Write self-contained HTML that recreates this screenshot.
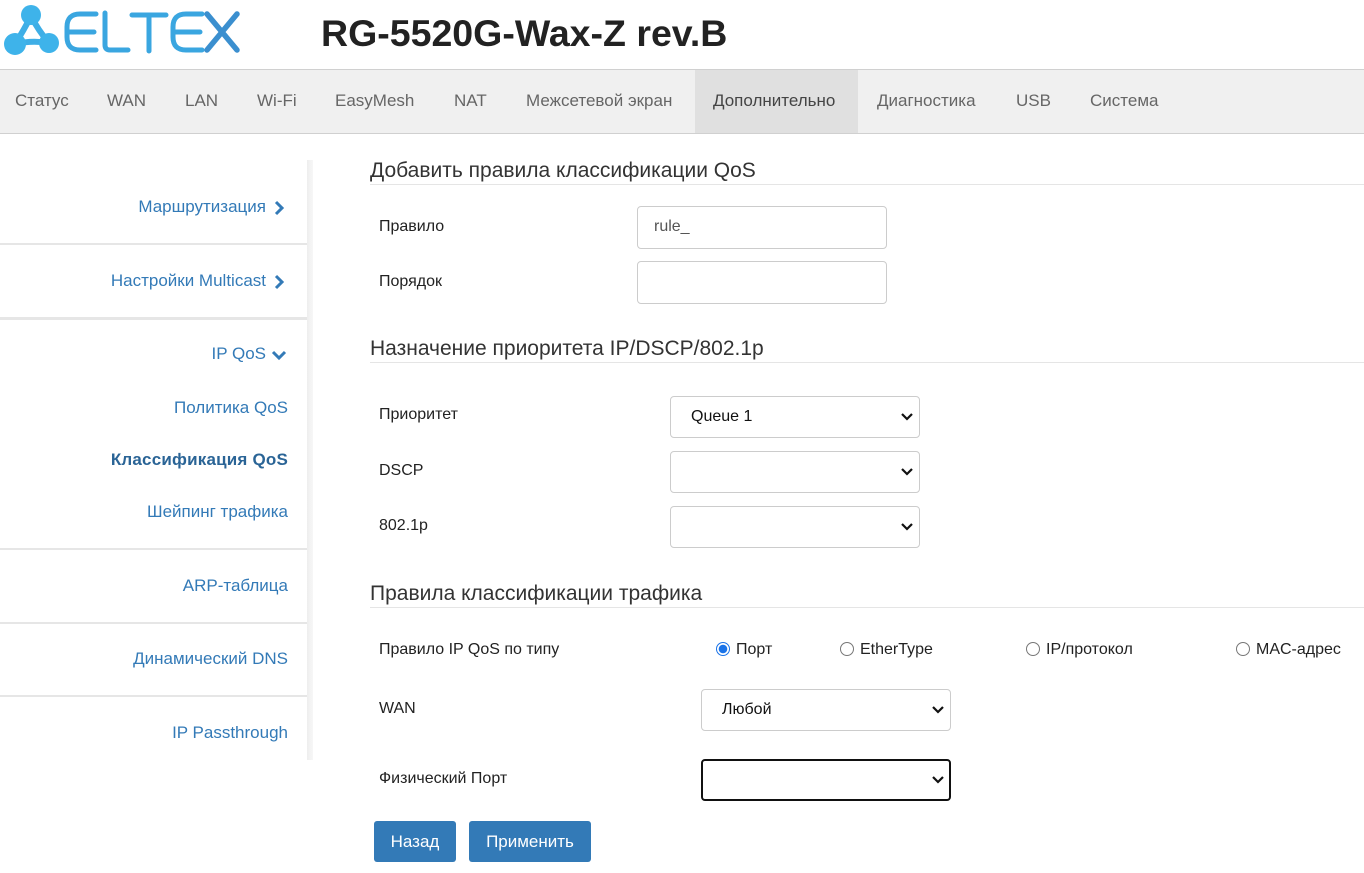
<!DOCTYPE html>
<html><head><meta charset="utf-8"><style>
*{box-sizing:border-box;margin:0;padding:0}
body{width:1364px;height:873px;position:relative;background:#fff;font-family:"Liberation Sans",Arial,sans-serif;overflow:hidden}
.a{position:absolute;white-space:nowrap}
.nav{position:absolute;left:0;top:69px;width:1364px;height:65px;background:#f0f0f0;border-top:1px solid #d0d0d0;border-bottom:1px solid #d0d0d0}
.nav span{position:absolute;top:21px;font-size:17px;color:#666}
.side{position:absolute;left:0;width:307px;text-align:right;font-size:17px;color:#337ab7}
.hr{position:absolute;left:0;width:307px;height:2px;background:#e6e6e6}
.h{position:absolute;left:370px;font-size:21px;color:#333}
.line{position:absolute;left:370px;width:994px;height:1px;background:#e5e5e5}
.lb{position:absolute;left:379px;font-size:16px;color:#222}
.in{position:absolute;border:1px solid #ccc;border-radius:4px;background:#fff;font-size:16px;color:#555;padding-left:16px;line-height:40px}
.sel{position:absolute;border:1px solid #ccc;border-radius:4px;background:#fff;font-size:16px;color:#111;padding-left:20px;line-height:39px}
.sel svg{position:absolute;right:6px;top:15px}
.rd{position:absolute;font-size:16px;color:#222}
.rd i{display:inline-block;width:14px;height:14px;border:1px solid #777;border-radius:50%;vertical-align:-2px;margin-right:6px}
.btn{position:absolute;top:821px;height:41px;background:#337ab7;color:#fff;font-size:17px;border-radius:3px;text-align:center;line-height:41px}
</style></head><body>
<svg class="a" style="left:0;top:0" width="250" height="62" viewBox="0 0 250 62">
<g stroke="#3eaee6" stroke-width="6" fill="none" stroke-linecap="round">
<path d="M31 16 Q24 30 15 44 M31 16 Q38 30 49 43 M15 44 Q32 40 49 43"/></g>
<circle cx="31" cy="15" r="10" fill="#3eb3ea"/>
<circle cx="15" cy="44" r="11" fill="#3eb3ea"/>
<circle cx="49" cy="43" r="10" fill="#3eb3ea"/>
<g stroke="#3aa6e0" stroke-width="5" fill="none" stroke-linecap="round" stroke-linejoin="round">
<path d="M96 14 H80 Q67 14 67 27 V37 Q67 50 80 50 H96 M69 32 H94"/>
<path d="M105 13 V45 Q105 50 110 50 H128"/>
<path d="M132 15 H166 M149 15 V51"/>
<path d="M202 14 H186 Q173 14 173 27 V37 Q173 50 186 50 H202 M175 32 H200"/>
</g>
<path d="M207 14 L237 50 M237 14 L207 50" stroke="#3b8fcf" stroke-width="5.5" stroke-linecap="round"/>
</svg>
<div class="a" style="left:321px;top:12px;font-size:37.5px;font-weight:bold;color:#222">RG-5520G-Wax-Z rev.B</div>
<div class="nav">
<span style="left:15px">Статус</span><span style="left:107px">WAN</span><span style="left:185px">LAN</span><span style="left:257px">Wi-Fi</span><span style="left:335px">EasyMesh</span><span style="left:454px">NAT</span><span style="left:526px">Межсетевой экран</span>
<div style="position:absolute;left:695px;top:0;width:163px;height:63px;background:#e0e0e0"></div>
<span style="left:713px;color:#444">Дополнительно</span><span style="left:877px">Диагностика</span><span style="left:1016px">USB</span><span style="left:1090px">Система</span>
</div>
<div class="a" style="left:307px;top:160px;width:6px;height:600px;background:linear-gradient(90deg,#eee,#f7f7f7)"></div>
<div class="side" style="top:197px;padding-right:41px">Маршрутизация</div>
<div class="hr" style="top:243px"></div>
<div class="side" style="top:271px;padding-right:41px">Настройки Multicast</div>
<div class="hr" style="top:317px;height:3px"></div>
<div class="side" style="top:344px;padding-right:41px">IP QoS</div>
<svg class="a" style="left:272px;top:200px" width="14" height="16" viewBox="0 0 14 16"><path d="M4 2 L10 8 L4 14" stroke="#337ab7" stroke-width="3" fill="none"/></svg>
<svg class="a" style="left:272px;top:274px" width="14" height="16" viewBox="0 0 14 16"><path d="M4 2 L10 8 L4 14" stroke="#337ab7" stroke-width="3" fill="none"/></svg>
<svg class="a" style="left:271px;top:348px" width="16" height="14" viewBox="0 0 16 14"><path d="M2 4 L8 10 L14 4" stroke="#337ab7" stroke-width="3" fill="none"/></svg>
<div class="side" style="top:398px;padding-right:19px">Политика QoS</div>
<div class="side" style="top:450px;padding-right:19px;font-weight:bold;color:#2a6496;letter-spacing:0.2px">Классификация QoS</div>
<div class="side" style="top:502px;padding-right:19px">Шейпинг трафика</div>
<div class="hr" style="top:548px"></div>
<div class="side" style="top:576px;padding-right:19px">ARP-таблица</div>
<div class="hr" style="top:622px"></div>
<div class="side" style="top:649px;padding-right:19px">Динамический DNS</div>
<div class="hr" style="top:695px"></div>
<div class="side" style="top:723px;padding-right:19px">IP Passthrough</div>

<div class="h" style="top:159px">Добавить правила классификации QoS</div><div class="line" style="top:184px"></div>
<div class="lb" style="top:218px">Правило</div><div class="in" style="left:637px;top:206px;width:250px;height:43px">rule_</div>
<div class="lb" style="top:273px">Порядок</div><div class="in" style="left:637px;top:261px;width:250px;height:43px"></div>
<div class="h" style="top:337px">Назначение приоритета IP/DSCP/802.1p</div><div class="line" style="top:362px"></div>
<div class="lb" style="top:406px">Приоритет</div><div class="sel" style="left:670px;top:396px;width:250px;height:42px">Queue 1<svg width="12" height="10" viewBox="0 0 12 10"><path d="M1 2 L6 7 L11 2" stroke="#111" stroke-width="2.2" fill="none"/></svg></div>
<div class="lb" style="top:462px">DSCP</div><div class="sel" style="left:670px;top:451px;width:250px;height:42px"><svg width="12" height="10" viewBox="0 0 12 10"><path d="M1 2 L6 7 L11 2" stroke="#111" stroke-width="2.2" fill="none"/></svg></div>
<div class="lb" style="top:517px">802.1p</div><div class="sel" style="left:670px;top:506px;width:250px;height:42px"><svg width="12" height="10" viewBox="0 0 12 10"><path d="M1 2 L6 7 L11 2" stroke="#111" stroke-width="2.2" fill="none"/></svg></div>
<div class="h" style="top:582px">Правила классификации трафика</div><div class="line" style="top:607px"></div>
<div class="lb" style="top:641px">Правило IP QoS по типу</div>
<div class="rd" style="left:716px;top:641px"><i style="border:1px solid #1a73e8;background:radial-gradient(circle,#1a73e8 0 4px,#fff 4.5px)"></i>Порт</div>
<div class="rd" style="left:840px;top:641px"><i></i>EtherType</div>
<div class="rd" style="left:1026px;top:641px"><i></i>IP/протокол</div>
<div class="rd" style="left:1236px;top:641px"><i></i>MAC-адрес</div>
<div class="lb" style="top:700px">WAN</div><div class="sel" style="left:701px;top:689px;width:250px;height:42px">Любой<svg width="12" height="10" viewBox="0 0 12 10"><path d="M1 2 L6 7 L11 2" stroke="#111" stroke-width="2.2" fill="none"/></svg></div>
<div class="lb" style="top:770px">Физический Порт</div><div class="sel" style="left:701px;top:759px;width:250px;height:42px;border:2px solid #111"><svg width="12" height="10" viewBox="0 0 12 10" style="top:14px;right:5px"><path d="M1 2 L6 7 L11 2" stroke="#111" stroke-width="2.2" fill="none"/></svg></div>
<div class="btn" style="left:374px;width:82px">Назад</div>
<div class="btn" style="left:469px;width:122px">Применить</div>
</body></html>
